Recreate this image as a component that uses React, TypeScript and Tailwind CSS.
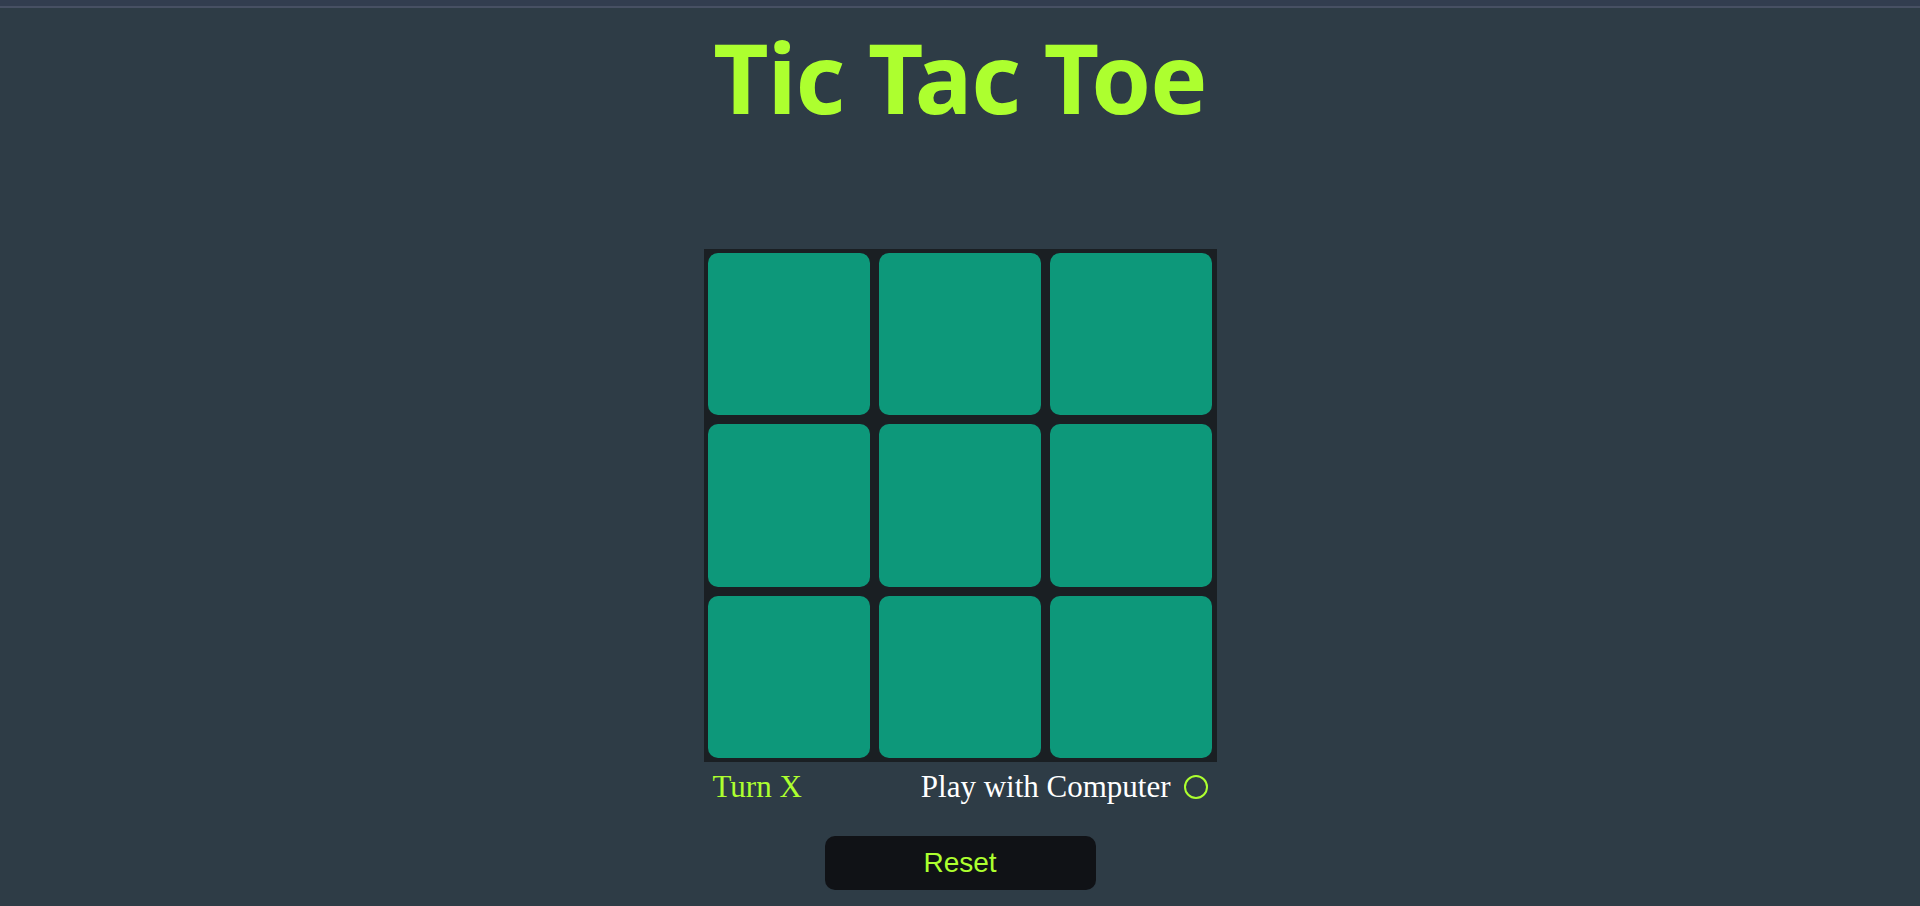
import React from 'react';

const cells = Array.from({ length: 9 }, (_, i) => i);

const App: React.FC = () => {
  return (
    <div className="min-h-screen bg-[#2e3c46] flex flex-col items-center">
      <div className="w-full h-[8px] bg-[#323d4f] border-b-2 border-[#475063]" />

      <h1 className="mt-[21px] text-[96px] leading-none font-bold tracking-[-1px] text-[#adff2f] font-['Noto_Sans',sans-serif]">
        Tic Tac Toe
      </h1>

      <div className="mt-[124px] w-[513px] p-[4px] grid grid-cols-3 gap-[9px] bg-[#1a1f23]">
        {cells.map((i) => (
          <button key={i} className="aspect-square rounded-[10px] bg-[#0d987a]" />
        ))}
      </div>

      <div className="mt-[7px] w-[513px] px-[9px] flex items-center justify-between font-['Liberation_Serif',serif] text-[31px] leading-[36px]">
        <span className="text-[#adff2f]">Turn X</span>
        <label className="flex items-center gap-[13px] text-white">
          Play with Computer
          <span className="w-[24px] h-[24px] rounded-full border-2 border-[#adff2f]" />
        </label>
      </div>

      <button className="mt-[31px] w-[271px] h-[54px] rounded-[10px] bg-[#101216] text-[#adff2f] text-[28px] font-['Liberation_Sans',sans-serif]">
        Reset
      </button>
    </div>
  );
};

export default App;
